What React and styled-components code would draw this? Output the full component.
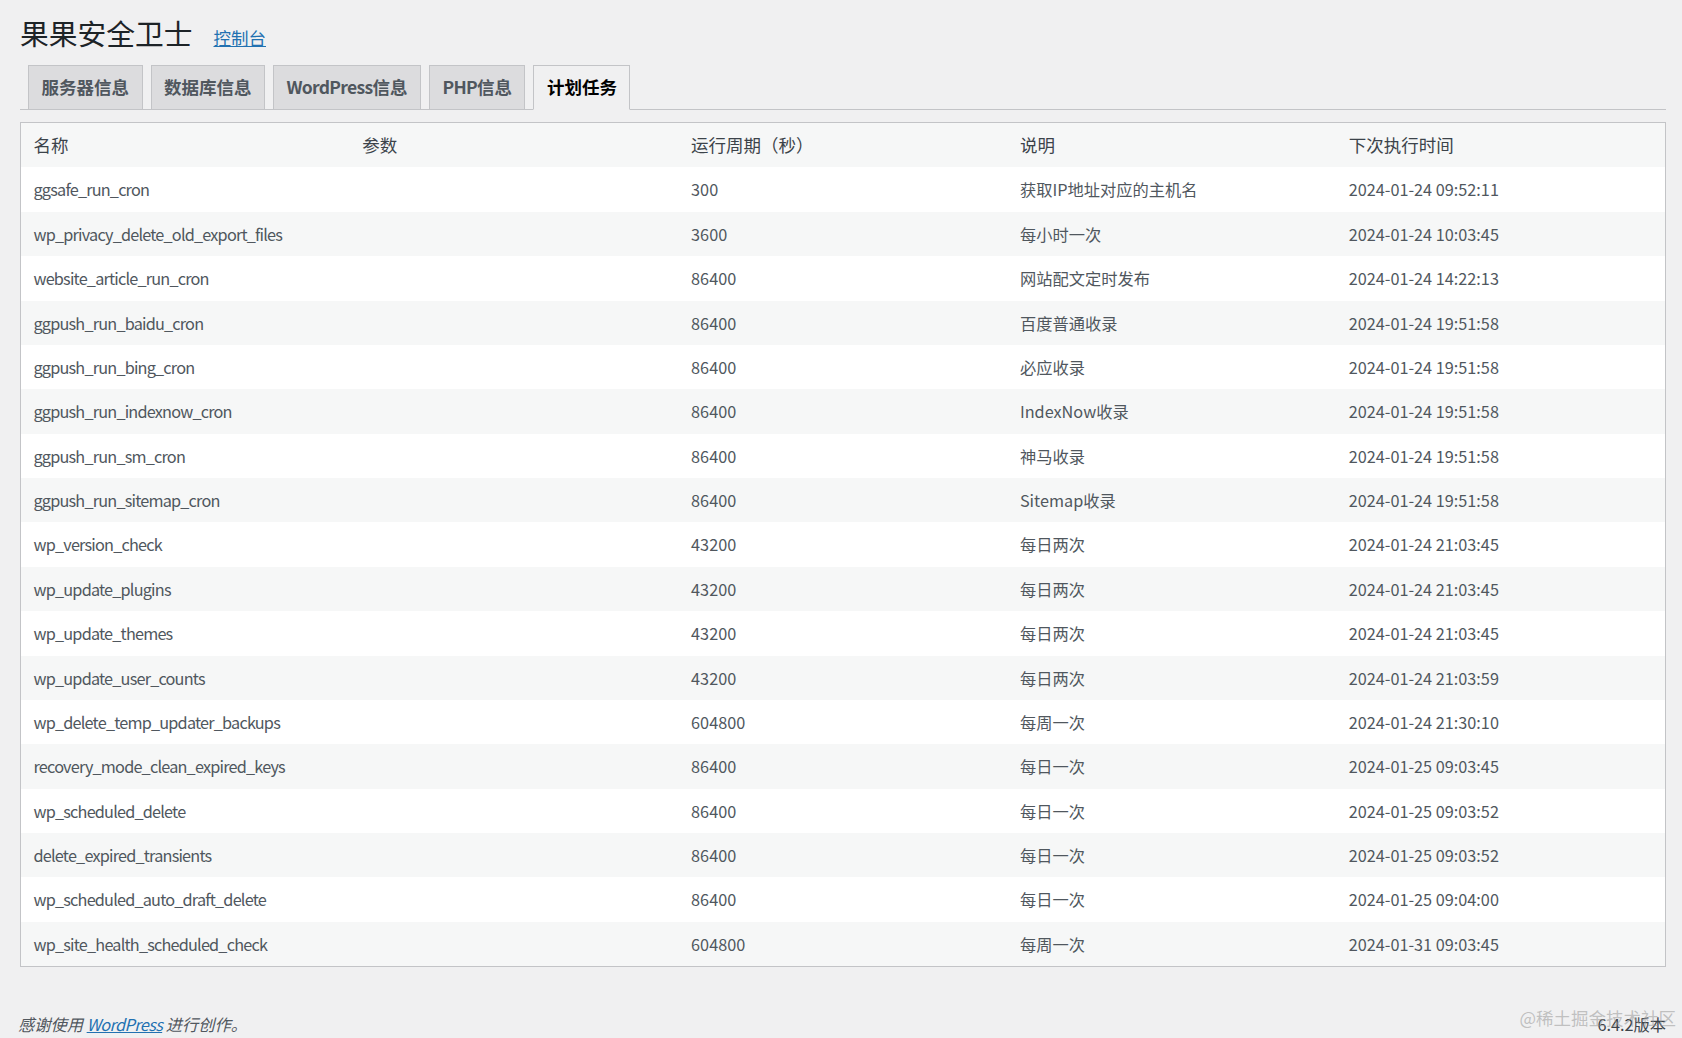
import React from 'react'
import styled, { createGlobalStyle } from 'styled-components'

const GlobalStyle = createGlobalStyle`
    html, body {
        margin: 0;
        padding: 0;
        background: #f0f0f1;
        overflow: hidden;
    }
    body {
        font-family: "Noto Sans CJK SC", "Liberation Sans", sans-serif;
        color: #3c434a;
    }
`;

const Wrap = styled.div`
    padding: 14px 16px 0 20px;
    position: relative;
    height: 1038px;
    box-sizing: border-box;
`;

const TitleRow = styled.div`
    display: flex;
    align-items: baseline;
    height: 37px;
`;

const Title = styled.h1`
    margin: 0;
    font-size: 28.75px;
    font-weight: 400;
    line-height: 37px;
    color: #1d2327;
`;

const TitleLink = styled.a`
    margin-left: 21px;
    font-size: 17.5px;
    color: #2271b1;
    text-decoration: underline;
`;

const TabBar = styled.nav`
    display: flex;
    align-items: flex-end;
    gap: 8px;
    margin-top: 14px;
    padding-left: 8px;
    border-bottom: 1px solid #c3c4c7;
`;

const Tab = styled.a`
    display: block;
    margin-bottom: -1px;
    padding: 6.25px 12.5px;
    font-size: 17.5px;
    line-height: 30px;
    font-weight: 600;
    text-decoration: none;
    border: 1px solid #c3c4c7;
    border-bottom-color: ${({ active }) => active ? '#f0f0f1' : '#c3c4c7'};
    background: ${({ active }) => active ? '#f0f0f1' : '#dcdcde'};
    color: ${({ active }) => active ? '#000' : '#50575e'};
    white-space: nowrap;
`;

const Latin = styled.span`
    letter-spacing: -0.7px;
`;

const Table = styled.table`
    width: 100%;
    margin-top: 12.5px;
    table-layout: fixed;
    border-spacing: 0;
    border: 1px solid #c3c4c7;
    background: #fff;
`;

const Row = styled.tr`
    background: ${({ striped }) => striped ? '#f6f7f7' : '#fff'};
`;

const HeadCell = styled.td`
    padding: 10px 12.5px;
    height: 24.38px;
    font-size: 17.5px;
    line-height: 24.38px;
    color: #3c434a;
    text-align: left;
`;

const Cell = styled.td`
    padding: 10px 12.5px;
    height: 24.38px;
    font-size: 16.25px;
    line-height: 24.38px;
    color: #50575e;
    white-space: nowrap;
    letter-spacing: ${({ tight }) => tight ? '-0.8px' : '0'};
`;

const Footer = styled.div`
    display: flex;
    justify-content: space-between;
    align-items: baseline;
    margin-top: 45px;
    font-size: 16.25px;
    line-height: 24px;
    color: #50575e;
`;

const Thanks = styled.p`
    margin: 0 0 0 -2px;
    font-style: italic;

    a {
        color: #2271b1;
        text-decoration: underline;
        letter-spacing: -0.6px;
    }
`;

const Version = styled.p`
    margin: 0;
    color: #3c434a;
`;

const Watermark = styled.span`
    position: absolute;
    right: 6px;
    bottom: 8px;
    font-size: 17.5px;
    line-height: 24px;
    color: rgba(150, 150, 150, 0.55);
    pointer-events: none;
`;

const tabs = [
    ['', '服务器信息'],
    ['', '数据库信息'],
    ['WordPress', '信息'],
    ['PHP', '信息'],
    ['', '计划任务'],
];

const columns = ['名称', '参数', '运行周期（秒）', '说明', '下次执行时间'];

const crons = [
    ['ggsafe_run_cron', '300', '获取IP地址对应的主机名', '2024-01-24 09:52:11'],
    ['wp_privacy_delete_old_export_files', '3600', '每小时一次', '2024-01-24 10:03:45'],
    ['website_article_run_cron', '86400', '网站配文定时发布', '2024-01-24 14:22:13'],
    ['ggpush_run_baidu_cron', '86400', '百度普通收录', '2024-01-24 19:51:58'],
    ['ggpush_run_bing_cron', '86400', '必应收录', '2024-01-24 19:51:58'],
    ['ggpush_run_indexnow_cron', '86400', 'IndexNow收录', '2024-01-24 19:51:58'],
    ['ggpush_run_sm_cron', '86400', '神马收录', '2024-01-24 19:51:58'],
    ['ggpush_run_sitemap_cron', '86400', 'Sitemap收录', '2024-01-24 19:51:58'],
    ['wp_version_check', '43200', '每日两次', '2024-01-24 21:03:45'],
    ['wp_update_plugins', '43200', '每日两次', '2024-01-24 21:03:45'],
    ['wp_update_themes', '43200', '每日两次', '2024-01-24 21:03:45'],
    ['wp_update_user_counts', '43200', '每日两次', '2024-01-24 21:03:59'],
    ['wp_delete_temp_updater_backups', '604800', '每周一次', '2024-01-24 21:30:10'],
    ['recovery_mode_clean_expired_keys', '86400', '每日一次', '2024-01-25 09:03:45'],
    ['wp_scheduled_delete', '86400', '每日一次', '2024-01-25 09:03:52'],
    ['delete_expired_transients', '86400', '每日一次', '2024-01-25 09:03:52'],
    ['wp_scheduled_auto_draft_delete', '86400', '每日一次', '2024-01-25 09:04:00'],
    ['wp_site_health_scheduled_check', '604800', '每周一次', '2024-01-31 09:03:45'],
];

export default function App() {
    return (
        <Wrap>
            <GlobalStyle />
            <TitleRow>
                <Title>果果安全卫士</Title>
                <TitleLink href="#">控制台</TitleLink>
            </TitleRow>
            <TabBar>
                {tabs.map(([latin, cjk], i) => (
                    <Tab key={latin + cjk} href="#" active={i === tabs.length - 1}>
                        {latin && <Latin>{latin}</Latin>}{cjk}
                    </Tab>
                ))}
            </TabBar>
            <Table>
                <tbody>
                    <Row striped>
                        {columns.map(c => <HeadCell key={c}>{c}</HeadCell>)}
                    </Row>
                    {crons.map(([name, period, desc, next], i) => (
                        <Row key={name} striped={i % 2 === 1}>
                            <Cell tight>{name}</Cell>
                            <Cell></Cell>
                            <Cell>{period}</Cell>
                            <Cell>{desc}</Cell>
                            <Cell>{next}</Cell>
                        </Row>
                    ))}
                </tbody>
            </Table>
            <Footer>
                <Thanks>感谢使用 <a href="#">WordPress</a> 进行创作。</Thanks>
                <Version>6.4.2版本</Version>
            </Footer>
            <Watermark>@稀土掘金技术社区</Watermark>
        </Wrap>
    )
}
